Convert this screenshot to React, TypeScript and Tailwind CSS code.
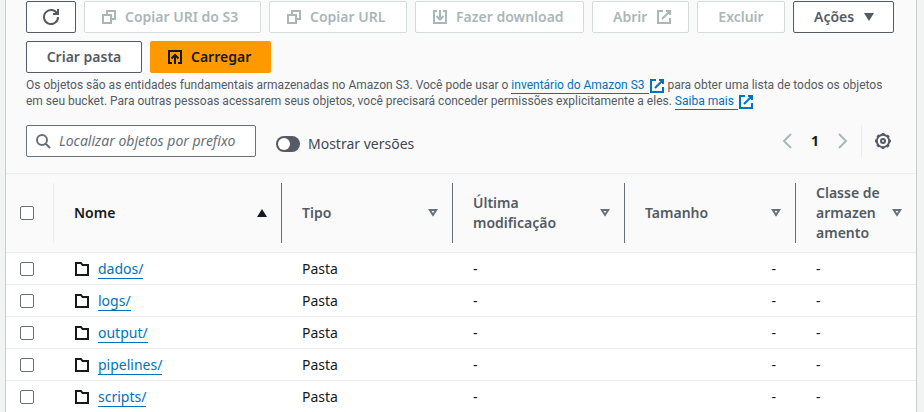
import type { ReactNode } from 'react';

const ICONS = {
  refresh: 'M10 5h5V0M15 8a7 7 0 1 1-.8-3.2',
  copy: 'M2 6h8v8H2zM6 5V2h8v8h-3',
  download: 'M5 2H2v12h12V2h-3M8 1v9M4.5 7 8 10.5 11.5 7',
  upload: 'M5 14H2V2h12v12h-3M8 15V6M4.5 9.5 8 6l3.5 3.5',
  external: 'M10 2h4v4M6 10l8-8M14 9v5H2V2h5',
  folder: 'M2 14V2h5l1.5 2H14v10z',
  search: 'M12 7A5 5 0 1 1 2 7a5 5 0 0 1 10 0zM10.5 10.5 15 15',
  left: 'M12 1 5 8l7 7',
  right: 'M4 1l7 7-7 7',
};

function Icon({ name, className = '' }: { name: keyof typeof ICONS; className?: string }) {
  return (
    <svg
      viewBox="0 0 16 16"
      aria-hidden="true"
      className={`size-4 shrink-0 fill-none stroke-current stroke-2 ${className}`}
    >
      <path d={ICONS[name]} />
    </svg>
  );
}

function Gear() {
  return (
    <svg viewBox="0 0 16 16" aria-hidden="true" className="size-4 fill-none stroke-current stroke-2">
      <circle cx="8" cy="8" r="6.2" />
      <circle cx="8" cy="8" r="7" strokeDasharray="2.75 2.75" strokeDashoffset="1.4" />
      <circle cx="8" cy="8" r="2" />
    </svg>
  );
}

function Button({
  children,
  className,
  disabled = false,
  label,
}: {
  children: ReactNode;
  className: string;
  disabled?: boolean;
  label?: string;
}) {
  return (
    <button
      type="button"
      disabled={disabled}
      aria-label={label}
      className={`flex h-8 items-center whitespace-nowrap rounded-xs border text-sm font-semibold ${className}`}
    >
      {children}
    </button>
  );
}

const DISABLED = 'border-[#d5dbdb] bg-white text-[#aab7b8]';
const NORMAL = 'border-[#545b64] bg-white text-[#545b64]';
const CENTERED = 'justify-center';
const LEADING_ICON = 'gap-2 pl-4';
const TRAILING_ICON = 'justify-between pl-5 pr-4';

function ExternalLink({ children }: { children: ReactNode }) {
  return (
    <a href="#" className="whitespace-nowrap text-[#0073bb]">
      <span className="border-b border-current pb-px pr-1">{children}</span>
      <Icon name="external" className="-my-1 inline-block align-middle" />
    </a>
  );
}

function Checkbox({ label }: { label: string }) {
  return (
    <input
      type="checkbox"
      aria-label={label}
      className="block size-3.5 appearance-none rounded-xs border border-[#687078] bg-white"
    />
  );
}

function SortIcon({ active }: { active: boolean }) {
  return (
    <svg viewBox="0 0 10 8" aria-hidden="true" className="h-2 w-2.5 shrink-0">
      {active ? (
        <path d="M5 0l5 8H0z" className="fill-[#16191f]" />
      ) : (
        <path d="M1.8 1h6.4L5 6z" className="fill-none stroke-[#687078] stroke-2" />
      )}
    </svg>
  );
}

const COLUMNS = [
  { title: 'Nome', lines: ['Nome'] },
  { title: 'Tipo', lines: ['Tipo'] },
  { title: 'Última modificação', lines: ['Última', 'modificação'] },
  { title: 'Tamanho', lines: ['Tamanho'] },
  { title: 'Classe de armazenamento', lines: ['Classe de', 'armazen', 'amento'] },
];

const FOLDERS = ['dados/', 'logs/', 'output/', 'pipelines/', 'scripts/'];

export default function App() {
  return (
    <div className="overflow-hidden bg-[#f2f3f3] pl-[5px] pr-[7px] font-['Noto_Sans',sans-serif] text-sm text-[#16191f]">
      <main className="border-x border-[#c8cccc] bg-[#fafafa]">
        <header className="px-5 pt-px">
          <div className="flex flex-wrap gap-2">
            <Button className={`w-[50px] ${CENTERED} ${NORMAL}`} label="Atualizar">
              <Icon name="refresh" />
            </Button>
            <Button className={`w-[177px] ${LEADING_ICON} ${DISABLED}`} disabled>
              <Icon name="copy" />
              Copiar URI do S3
            </Button>
            <Button className={`w-[138px] ${LEADING_ICON} ${DISABLED}`} disabled>
              <Icon name="copy" />
              Copiar URL
            </Button>
            <Button className={`w-[169px] ${LEADING_ICON} ${DISABLED}`} disabled>
              <Icon name="download" />
              Fazer download
            </Button>
            <Button className={`w-[97px] ${TRAILING_ICON} ${DISABLED}`} disabled>
              Abrir
              <Icon name="external" />
            </Button>
            <Button className={`w-[88px] ${CENTERED} ${DISABLED}`} disabled>
              Excluir
            </Button>
            <Button className={`w-[101px] ${TRAILING_ICON} ${NORMAL}`}>
              Ações
              <svg viewBox="0 0 16 16" aria-hidden="true" className="size-4 fill-current">
                <path d="M3 4h10L8 12z" />
              </svg>
            </Button>
            <Button className={`w-[116px] ${CENTERED} ${NORMAL}`}>Criar pasta</Button>
            <Button
              className={`w-[121px] border-[#ff9900] bg-[#ff9900] text-[#16191f] ${LEADING_ICON}`}
            >
              <Icon name="upload" />
              Carregar
            </Button>
          </div>
          <p className="mt-1 font-[Roboto,sans-serif] text-xs text-[#545b64]">
            Os objetos são as entidades fundamentais armazenadas no Amazon S3. Você pode usar o{' '}
            <ExternalLink>inventário do Amazon S3</ExternalLink> para obter uma lista de todos os
            objetos em seu bucket. Para outras pessoas acessarem seus objetos, você precisará
            conceder permissões explicitamente a eles. <ExternalLink>Saiba mais</ExternalLink>
          </p>
        </header>

        <div className="flex items-center justify-between px-5 py-4">
          <div className="flex items-center gap-5">
            <label className="flex h-8 w-[230px] items-center gap-2 rounded-xs border border-[#687078] bg-white pl-2 text-[#687078]">
              <Icon name="search" />
              <input
                type="text"
                aria-label="Localizar objetos por prefixo"
                placeholder="Localizar objetos por prefixo"
                className="min-w-0 flex-1 outline-none placeholder:italic placeholder:text-[#687078]"
              />
            </label>
            <label className="flex items-center gap-2 pt-1.5 text-[#414750]">
              <input
                type="checkbox"
                role="switch"
                className="h-4 w-6 appearance-none rounded-full bg-[#545b64] p-0.5 before:block before:size-3 before:rounded-full before:bg-white"
              />
              Mostrar versões
            </label>
          </div>
          <div className="flex items-center">
            <nav aria-label="Paginação" className="flex items-center gap-4 pr-2.5">
              <button type="button" disabled aria-label="Página anterior" className="text-[#aab7b8]">
                <Icon name="left" />
              </button>
              <button type="button" aria-current="page" className="w-2 text-center font-bold">
                1
              </button>
              <button type="button" disabled aria-label="Próxima página" className="text-[#aab7b8]">
                <Icon name="right" />
              </button>
            </nav>
            <div className="flex h-8 items-center border-l border-[#eaeded] pl-[13px] pr-[5px]">
              <button type="button" aria-label="Preferências" className="text-[#545b64]">
                <Gear />
              </button>
            </div>
          </div>
        </div>

        <table className="w-full table-fixed border-t border-[#eaeded] text-left">
          <colgroup>
            <col className="w-12" />
            <col className="w-[228px]" />
            <col className="w-[171px]" />
            <col className="w-[172px]" />
            <col className="w-[171px]" />
            <col />
          </colgroup>
          <thead>
            <tr className="border-b border-[#eaeded]">
              <th scope="col" className="py-[9px]">
                <div className="flex h-[60px] items-center border-r border-[#eaeded] pl-3.5">
                  <Checkbox label="Selecionar tudo" />
                </div>
              </th>
              {COLUMNS.map(({ title, lines }, i) => (
                <th
                  key={title}
                  scope="col"
                  className={`font-semibold ${i === 0 ? 'text-[#16191f]' : 'text-[#545b64]'}`}
                >
                  <div
                    className={`flex h-[60px] items-center justify-between pl-5 pr-3.5 ${
                      i < 4 ? 'border-r border-[#687078]' : ''
                    }`}
                  >
                    <span className="leading-5">
                      {lines.map((line) => (
                        <span key={line} className="block whitespace-nowrap">
                          {line}
                        </span>
                      ))}
                    </span>
                    <SortIcon active={i === 0} />
                  </div>
                </th>
              ))}
            </tr>
          </thead>
          <tbody className="bg-white">
            {FOLDERS.map((name) => (
              <tr key={name} className="h-8 border-b border-[#eaeded]">
                <td className="pl-3.5 pt-px">
                  <Checkbox label={`Selecionar ${name}`} />
                </td>
                <td className="pl-5 pt-px">
                  <div className="flex items-center gap-2">
                    <Icon name="folder" />
                    <a href="#" className="text-[#0073bb]">
                      <span className="border-b border-current">{name}</span>
                    </a>
                  </div>
                </td>
                <td className="pl-5 pt-px">Pasta</td>
                <td className="pl-5 pt-px">-</td>
                <td className="pr-5 pt-px text-right">-</td>
                <td className="pl-5 pt-px">-</td>
              </tr>
            ))}
          </tbody>
        </table>
      </main>
    </div>
  );
}
